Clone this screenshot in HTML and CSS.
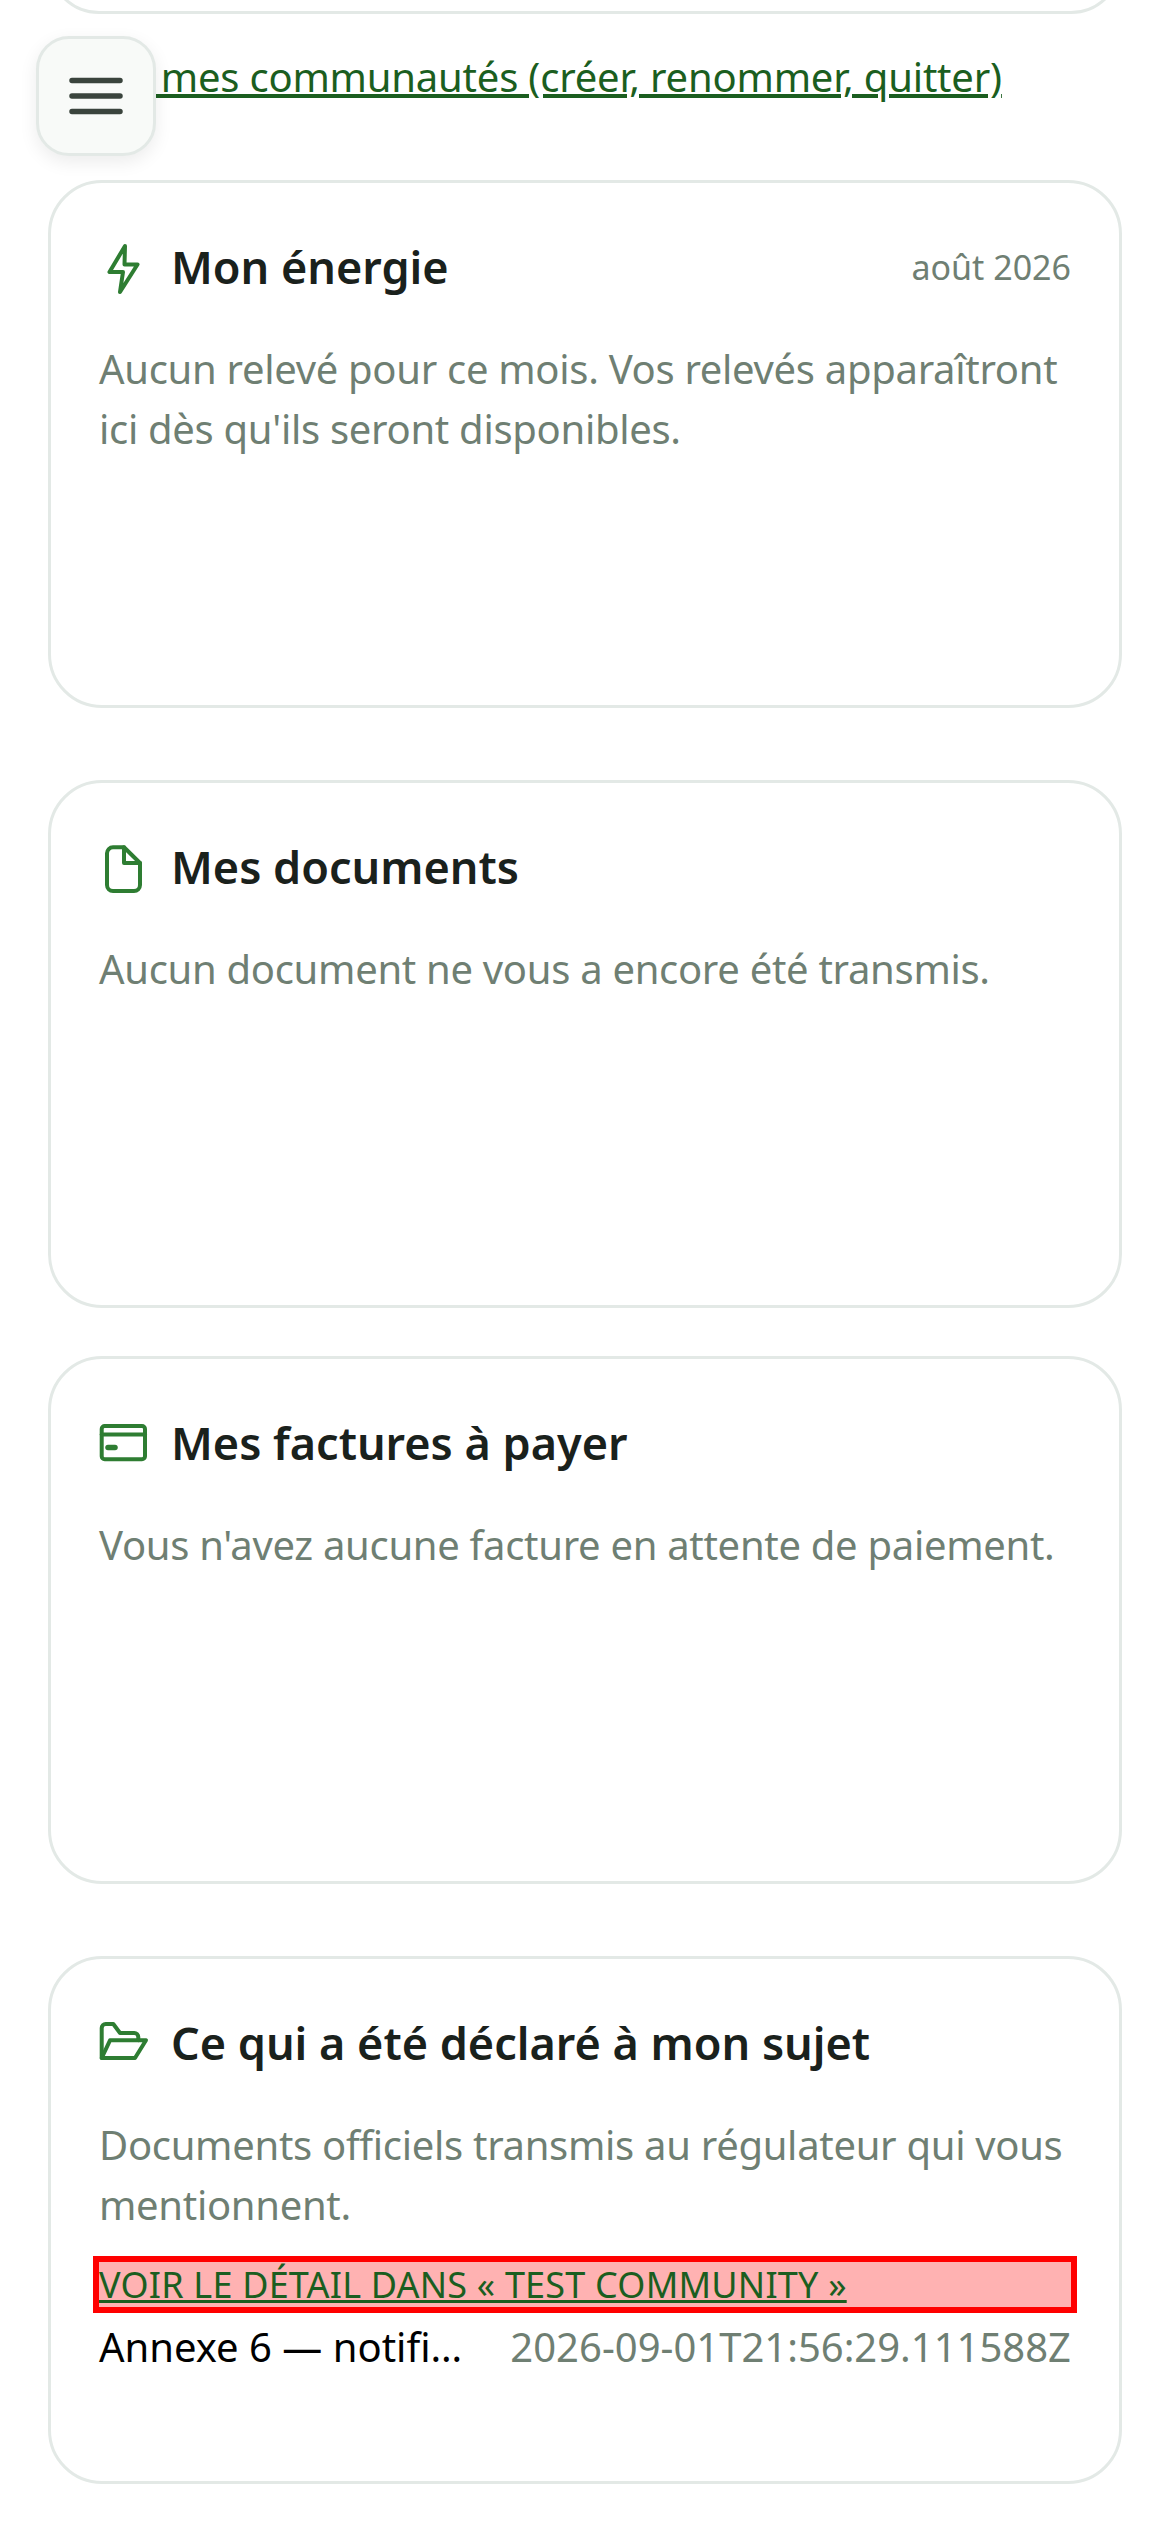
FILE: index.html
```html
<!DOCTYPE html>
<html lang="fr">
<head>
<meta charset="utf-8">
<title>Tableau de bord</title>
<link rel="stylesheet" href="styles.css">
</head>
<body>
<button class="menu" aria-label="Menu">
  <svg viewBox="0 0 54 42" width="54" height="42"><path d="M3 5.500h48M3 21h48M3 36.500h48"/></svg>
</button>
<main class="page">
  <div class="card card-cut"></div>
  <p class="manage"><a href="#">Gérer mes communautés (créer, renommer, quitter)</a></p>

  <section class="card">
    <header class="card-head">
      <svg class="icon" viewBox="0 0 60 60"><path d="M30 9 14.500 35H28l-3 20 17.500-27.500H29.500z"/></svg>
      <h2>Mon énergie</h2>
      <span class="when">août 2026</span>
    </header>
    <p class="note">Aucun relevé pour ce mois. Vos relevés apparaîtront ici dès qu'ils seront disponibles.</p>
  </section>

  <section class="card card-far">
    <header class="card-head">
      <svg class="icon" viewBox="0 0 60 60"><path d="M29 10.300H18a6 6 0 0 0-6 6V48a6 6 0 0 0 6 6h21a6 6 0 0 0 6-6V26z"/><path d="M29 10.300V26H45"/></svg>
      <h2>Mes documents</h2>
    </header>
    <p class="note">Aucun document ne vous a encore été transmis.</p>
  </section>

  <section class="card card-near">
    <header class="card-head">
      <svg class="icon" viewBox="0 0 60 60"><rect x="6.700" y="13" width="43.300" height="33.300" rx="3"/><path d="M6.700 21.500H50"/><path class="dash" d="M13 34.500h7"/></svg>
      <h2>Mes factures à payer</h2>
    </header>
    <p class="note">Vous n'avez aucune facture en attente de paiement.</p>
  </section>

  <section class="card card-far">
    <header class="card-head">
      <svg class="icon" viewBox="0 0 60 60"><path d="M6.700 45V15a4 4 0 0 1 4-4h7.600l6.700 9h14.300a4 4 0 0 1 4 4v3.300"/><path d="M6.700 45H40L51 27.300H15z"/></svg>
      <h2>Ce qui a été déclaré à mon sujet</h2>
    </header>
    <p class="note">Documents officiels transmis au régulateur qui vous mentionnent.</p>
    <div class="flagged"><a href="#">VOIR LE DÉTAIL DANS « TEST COMMUNITY »</a></div>
    <div class="doc-row">
      <span class="doc-name">Annexe 6 — notifi…</span>
      <span class="doc-date">2026-09-01T21:56:29.111588Z</span>
    </div>
  </section>
</main>
</body>
</html>
```
FILE: styles.css
```css
* { box-sizing: border-box; }
html, body { margin: 0; height: 2532px; overflow: hidden; background: #fff; }
body { font-family: "Noto Sans", "Open Sans", sans-serif; color: #000; }

.page { padding: 0 48px; }

.card {
  display: block;
  height: 528px;
  padding: 48px;
  border: 3px solid #e3e9e6;
  border-radius: 54px;
  background: #fff;
}
.card-cut { height: 100px; margin-top: -88px; }
.card-far { margin-top: 72px; }
.card-near { margin-top: 48px; }

.manage { margin: 34px 0 0; height: 132px; font-size: 40px; line-height: 57px; letter-spacing: -.2px; text-indent: -3px; }
.manage a { color: #1b5e20; }

.card-head { display: flex; align-items: center; height: 72px; }
.icon {
  flex: none;
  width: 60px;
  height: 60px;
  margin-left: -4px;
  margin-right: 16px;
  fill: none;
  stroke: #2e7d32;
  stroke-width: 4;
  stroke-linejoin: round;
  stroke-linecap: round;
}
.icon .dash { stroke-width: 5.5; }
h2 { margin: 0; font-size: 45px; line-height: 66px; font-weight: 600; color: #1a211c; }
.when { margin-left: auto; font-size: 34px; color: #6f7f73; }
.note { margin: 36px 0 0; font-size: 40px; line-height: 60px; letter-spacing: -.3px; color: #6f7f73; }

.flagged {
  margin-top: 27px;
  height: 45px;
  font-size: 36px;
  line-height: 45px;
  letter-spacing: .2px;
  outline: 6px solid #f00;
  background: rgba(255, 0, 0, .3);
}
.flagged a { color: #1b5e20; }

.doc-row { display: flex; justify-content: space-between; gap: 48px; margin-top: 10px; font-size: 40px; line-height: 60px; }
.doc-name { white-space: nowrap; }
.doc-date { flex: none; color: #6f7f73; }

.menu {
  position: absolute;
  left: 36px;
  top: 36px;
  width: 120px;
  height: 120px;
  display: flex;
  align-items: center;
  justify-content: center;
  padding: 0;
  border: 3px solid #e3e9e6;
  border-radius: 33px;
  background: #f8faf8;
  box-shadow: 0 6px 18px rgba(0, 0, 0, .08);
}
.menu svg { fill: none; stroke: #3a443d; stroke-width: 5.5; stroke-linecap: round; }
```
